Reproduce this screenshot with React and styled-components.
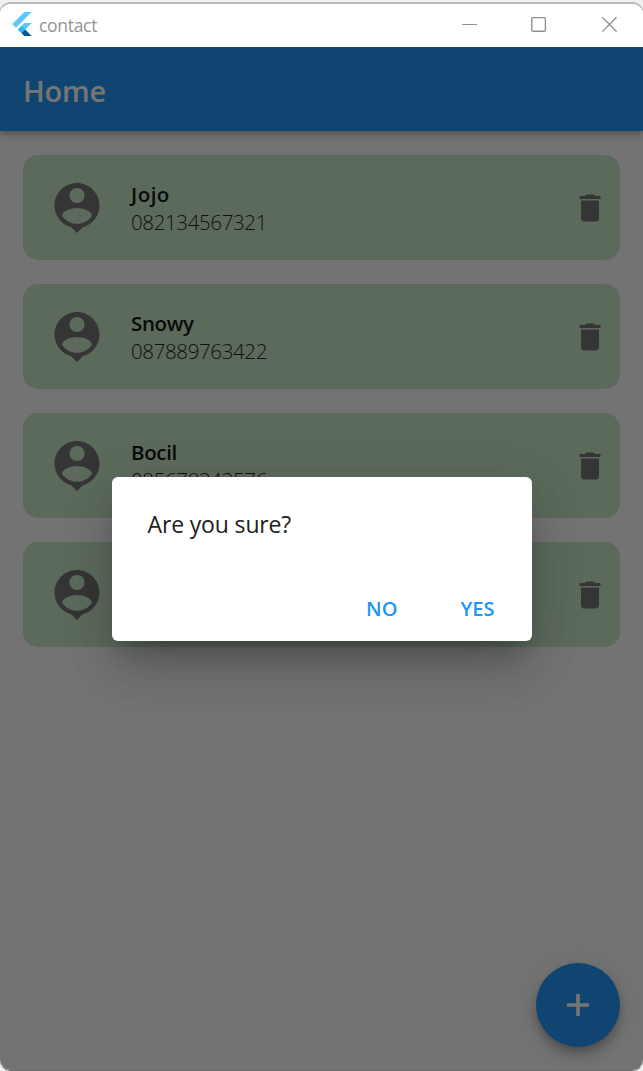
import React from "react";
import styled, { createGlobalStyle } from "styled-components";

const GlobalStyle = createGlobalStyle`
  * { box-sizing: border-box; }
  body { margin: 0; background: #f0f0f0; font-family: "Open Sans", "Noto Sans", sans-serif; }
  button { font: inherit; border: 0; padding: 0; background: none; }
`;

const Desktop = styled.div`
  height: 1071px;
  padding-top: 2px;
  overflow: hidden;
`;

const Window = styled.div`
  position: relative;
  display: flex;
  flex-direction: column;
  height: 1069px;
  margin: 0 -1px;
  border: 1px solid #b9b9b9;
  border-top-width: 2px;
  border-bottom-color: #6f6a6d;
  border-radius: 12px;
  overflow: hidden;
  background: #fff;
`;

const TitleBar = styled.header`
  position: relative;
  z-index: 1;
  display: flex;
  align-items: center;
  flex: 0 0 43px;
  padding: 0 26px 0 10px;
  background: #fff;
`;

const Logo = styled.svg`
  width: 24px;
  height: 24px;
  margin-top: -3px;
`;

const WindowTitle = styled.span`
  flex: 1;
  margin: -2px 0 0 5px;
  font-size: 17.5px;
  line-height: 24px;
  letter-spacing: -0.3px;
  color: #949494;
`;

const WindowControls = styled.div`
  display: flex;
  gap: 54px;
  margin-top: -3px;

  svg {
    display: block;
    width: 16px;
    height: 16px;
    fill: none;
    stroke: #8f8f8f;
  }
`;

const Screen = styled.main`
  position: relative;
  flex: 1;
  display: flex;
  flex-direction: column;
  background: #fafafa;
`;

const AppBar = styled.div`
  display: flex;
  align-items: center;
  height: 84px;
  padding: 4px 23px 0;
  background: #2196f3;
  box-shadow: 0 3px 6px -1px rgba(0, 0, 0, 0.18), 0 5px 7px rgba(0, 0, 0, 0.1), 0 1px 12px rgba(0, 0, 0, 0.06);
`;

const Heading = styled.h1`
  margin: 0;
  font-size: 29px;
  font-weight: 600;
  line-height: 40px;
  letter-spacing: -0.2px;
  color: #fff;
`;

const ContactList = styled.div`
  display: flex;
  flex-direction: column;
  gap: 24px;
  padding: 24px 23px;
`;

const ContactCard = styled.article`
  display: flex;
  align-items: center;
  height: 105px;
  padding: 0 12px 0 24px;
  border-radius: 15px;
  background: #c8e6c9;
`;

const MaterialIcon = styled.svg`
  flex: none;
  display: block;
  width: ${(p) => p.$size}px;
  height: ${(p) => p.$size}px;
  fill: ${(p) => p.$color || "#757575"};
`;

const ContactText = styled.div`
  flex: 1;
  margin: 0 0 0 24px;
`;

const Name = styled.div`
  font-size: 20.5px;
  font-weight: 600;
  line-height: 28px;
  letter-spacing: ${(p) => p.$tracking || "-0.35px"};
  color: #121712;
`;

const Phone = styled.div`
  font-size: 20.5px;
  font-weight: 300;
  line-height: 28px;
  letter-spacing: -0.37px;
  color: #242924;
`;

const Fab = styled.button`
  position: absolute;
  right: 23px;
  bottom: 23px;
  display: grid;
  place-items: center;
  width: 84px;
  height: 84px;
  border-radius: 50%;
  background: #2196f3;
  box-shadow: 0 5px 8px -1px rgba(0, 0, 0, 0.2), 0 9px 15px rgba(0, 0, 0, 0.14), 0 2px 27px rgba(0, 0, 0, 0.08);
`;

const Scrim = styled.div`
  position: absolute;
  inset: 0;
  display: flex;
  align-items: center;
  justify-content: center;
  background: rgba(0, 0, 0, 0.54);
`;

const Dialog = styled.section`
  display: flex;
  flex-direction: column;
  justify-content: space-between;
  width: 420px;
  height: 164px;
  padding: 31px 37px 16px 36px;
  border-radius: 6px;
  background: #fff;
  box-shadow: 0 16px 22px -10px rgba(0, 0, 0, 0.2), 0 32px 50px -4px rgba(0, 0, 0, 0.16), 0 13px 55px 2px rgba(0, 0, 0, 0.1);
`;

const Question = styled.p`
  margin: 0;
  font-size: 23px;
  line-height: 32px;
  letter-spacing: -0.15px;
  color: #212121;
`;

const Actions = styled.div`
  display: flex;
  justify-content: flex-end;
  gap: 63px;
`;

const TextButton = styled.button`
  font-size: 20px;
  font-weight: 600;
  line-height: 32px;
  color: #2196f3;
`;

const contacts = [
  { name: "Jojo", phone: "082134567321", tracking: "0.5px" },
  { name: "Snowy", phone: "087889763422" },
  { name: "Bocil", phone: "085678343576" },
  { name: "", phone: "" },
];

const personPath =
  "M12 2c-4.97 0-9 4.03-9 9 0 4.17 2.84 7.67 6.69 8.69L12 22l2.31-2.31C18.16 18.67 21 15.17 21 11c0-4.97-4.03-9-9-9zm0 2c1.66 0 3 1.34 3 3s-1.34 3-3 3-3-1.34-3-3 1.34-3 3-3zm0 14.3c-2.5 0-4.71-1.28-6-3.22.03-1.99 4-3.08 6-3.08 1.99 0 5.97 1.09 6 3.08-1.29 1.94-3.5 3.22-6 3.22z";
const deletePath =
  "M6 19c0 1.1.9 2 2 2h8c1.1 0 2-.9 2-2V7H6v12zM19 4h-3.5l-1-1h-5l-1 1H5v2h14V4z";
const addPath =
  "M19 13.15h-5.85V19h-2.3v-5.85H5v-2.3h5.85V5h2.3v5.85H19z";

function Icon({ path, size, color }) {
  return (
    <MaterialIcon viewBox="0 0 24 24" $size={size} $color={color}>
      <path d={path} />
    </MaterialIcon>
  );
}

export default function App() {
  return (
    <>
      <GlobalStyle />
      <Desktop>
        <Window>
          <TitleBar>
            <Logo viewBox="0 0 24 24">
              <path fill="#5cc8f8" d="M14.3 0 2.3 12 6 15.7 21.7 0z" />
              <path fill="#5cc8f8" d="M14.3 11.07 7.86 17.53l3.69 3.69L21.7 11.07z" />
              <path fill="#29b6f6" d="m11.55 13.84 3.69 3.69-3.69 3.69-3.69-3.69z" />
              <path fill="#01579b" d="m11.55 21.22 3.69-3.69L21.7 24h-7.37z" />
            </Logo>
            <WindowTitle>contact</WindowTitle>
            <WindowControls>
              <svg viewBox="0 0 16 16"><path d="M1 8.5h15" /></svg>
              <svg viewBox="0 0 16 16"><rect x=".8" y="1.6" width="13.6" height="13.6" rx="1.2" strokeWidth="1.4" /></svg>
              <svg viewBox="0 0 16 16"><path strokeWidth="1.3" d="m1.3 1.3 14.3 14.3M15.6 1.3 1.3 15.6" /></svg>
            </WindowControls>
          </TitleBar>
          <Screen>
            <AppBar>
              <Heading>Home</Heading>
            </AppBar>
            <ContactList>
              {contacts.map((c, i) => (
                <ContactCard key={i}>
                  <Icon path={personPath} size={60} />
                  <ContactText>
                    <Name $tracking={c.tracking}>{c.name}</Name>
                    <Phone>{c.phone}</Phone>
                  </ContactText>
                  <Icon path={deletePath} size={36} />
                </ContactCard>
              ))}
            </ContactList>
            <Fab aria-label="Add">
              <Icon path={addPath} size={38} color="#fff" />
            </Fab>
            <Scrim>
              <Dialog>
                <Question>Are you sure?</Question>
                <Actions>
                  <TextButton>NO</TextButton>
                  <TextButton>YES</TextButton>
                </Actions>
              </Dialog>
            </Scrim>
          </Screen>
        </Window>
      </Desktop>
    </>
  );
}
